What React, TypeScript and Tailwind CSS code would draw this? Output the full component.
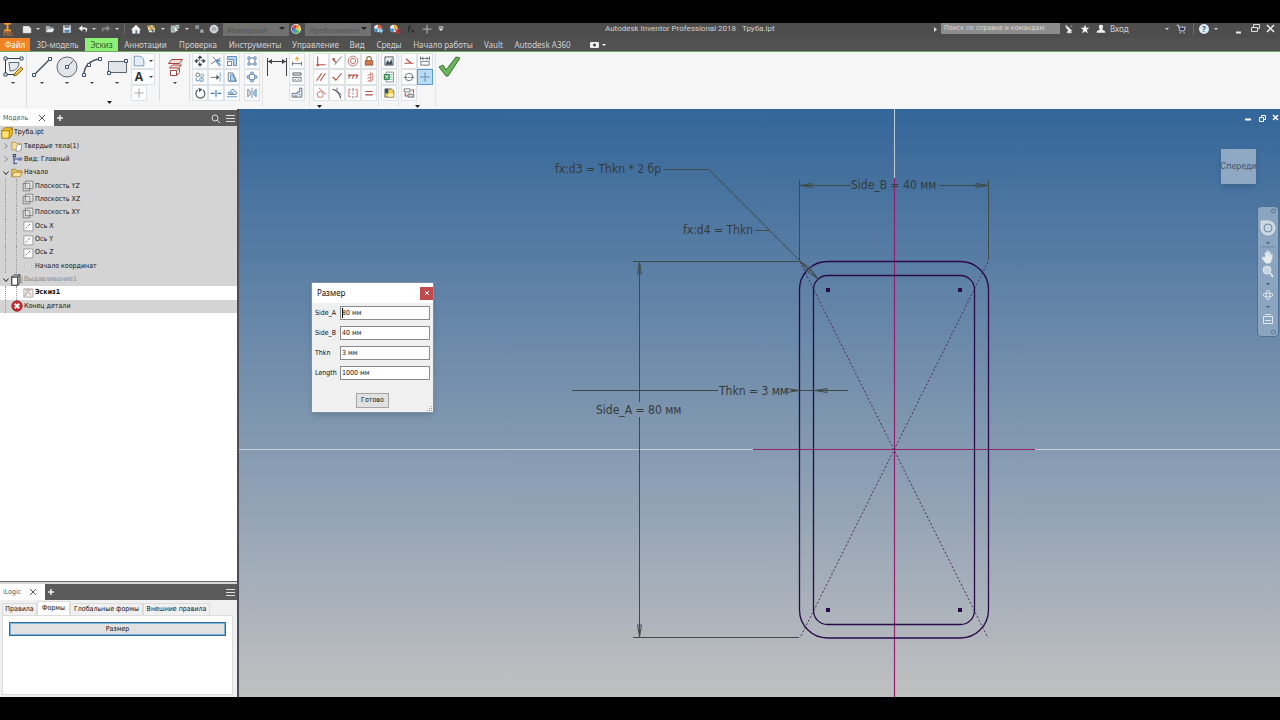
import type { ReactNode } from "react";

const art: Record<string, ReactNode> = {
  // quick access bar
  newFile: <path d="M2 4h9l3 3v7H2z" fill="#e8e8e8" stroke="#fff" />,
  open: (
    <>
      <path d="M2 13V4h5l1 2h5v2" fill="#9aa3ab" stroke="#cfd5da" />
      <path d="M2 13l3-5h10l-3 5z" fill="#e4e7ea" />
    </>
  ),
  save: (
    <>
      <path d="M2 2h12v12H2z" fill="#e6eaee" />
      <path d="M4 2h8v4H4z" fill="#6b7680" />
      <path d="M4 9h8v5H4z" fill="#5a8cb8" />
    </>
  ),
  undo: <path d="M7 2L1 7l6 5V8.500h4c2 0 2 2 1 5 4-3 4-8-1-8H7z" fill="#f2f2f2" />,
  redo: <path d="M9 2l6 5-6 5V8.500H5c-2 0-2 2-1 5-4-3-4-8 1-8h4z" fill="#8a8a8a" />,
  home: (
    <>
      <path d="M0 9l8-8 8 8h-2v6H2V9z" fill="#f1f1f1" />
      <path d="M7 10h3v5H7z" fill="#3f78a8" />
    </>
  ),
  sheet: (
    <>
      <path d="M2 3l8-1 4 3v8H5z" fill="#f3e3b4" />
      <path d="M2 3l7 3 5-1M5 9l8 1" stroke="#c3872b" strokeWidth="2" fill="none" />
      <path d="M8 6l5 5-3 2z" fill="#3f6b95" />
    </>
  ),
  pick: (
    <>
      <path d="M2 3h5v10H2zM9 2h5v5H9z" fill="#8fb4a4" stroke="#e6e6e6" />
      <path d="M7 4l6 7-3 0-1 3z" fill="#fff" />
    </>
  ),
  dots: (
    <>
      <path d="M2 2h6v6H2z" fill="#8d9499" />
      <path d="M10 9h5v5h-5z" fill="#aab0b5" />
    </>
  ),
  globe: (
    <>
      <circle cx="8" cy="8" r="7" fill="#dfe3e7" />
      <path d="M2 8h12M8 2v12M4 3.500c3 3 3 6 0 9M12 3.500c-3 3-3 6 0 9" stroke="#7d8489" fill="none" />
    </>
  ),
  wheel: (
    <>
      <circle cx="8" cy="8" r="8" fill="#eee" />
      <path d="M8 8V1a7 7 0 0 1 6 3.500z" fill="#f08a2c" />
      <path d="M8 8l6-3.500a7 7 0 0 1 0 7z" fill="#e8d53a" />
      <path d="M8 8l6 3.500A7 7 0 0 1 8 15z" fill="#5cb85c" />
      <path d="M8 8v7a7 7 0 0 1-6-3.500z" fill="#3c9ad6" />
      <path d="M8 8l-6 3.500a7 7 0 0 1 0-7z" fill="#6a55b5" />
      <path d="M8 8L2 4.500A7 7 0 0 1 8 1z" fill="#d8413c" />
    </>
  ),
  wheelAdd: (
    <>
      <circle cx="6" cy="7" r="6" fill="#e7edf2" />
      <path d="M6 7V1a6 6 0 0 1 6 6z" fill="#e3573c" />
      <path d="M6 7H0a6 6 0 0 0 6 6z" fill="#3f8fd0" />
      <path d="M8 9h7l-3.500 6z" fill="#bfe0f7" stroke="#3f8fd0" />
    </>
  ),
  wheelClear: (
    <>
      <circle cx="6" cy="7" r="6" fill="#e7edf2" />
      <path d="M6 7V1a6 6 0 0 1 6 6z" fill="#e9b23c" />
      <path d="M6 7H0a6 6 0 0 0 6 6z" fill="#3f8fd0" />
      <path d="M8 8l7 7M15 8l-7 7" stroke="#d22f2a" strokeWidth="2" />
    </>
  ),
  fx: (
    <path d="M8 2c-3-1-3 3-3 6s-1 6-3 5M3 6h5M9 9l4 5M13 9l-5 5" stroke="#1f1f1f" strokeWidth="1.500" fill="none" />
  ),
  cross: <path d="M8 1v14M1 8h14" stroke="#a5a5a5" strokeWidth="2" />,
  more: <path d="M3 3h10v2H3zM3 7h10l-5 5z" fill="#e8e8e8" />,
  dish: <path d="M3 2c0 5 4 9 10 9L3 2zM7 10l-2 4h7l-3-4zM10 5l3-3" fill="#eee" stroke="#eee" />,
  star: <path d="M8 1l2 5h5l-4 3.200L12.500 15 8 11.500 3.500 15 5 9.200 1 6h5z" fill="#f1f1f1" />,
  person: <path d="M8 1c3 0 4 2 3 5l-1 3c3 1 5 2 5 4v1H1v-1c0-2 2-3 5-4L5 6C4 3 5 1 8 1z" fill="#f1f1f1" />,
  cart: (
    <>
      <path d="M4 4h11l-2 7H6z" fill="#2b2f55" />
      <path d="M1 2h3l2 9h7l2-6H5M6 14h2M12 14h2" stroke="#d9dcf0" strokeWidth="1.500" fill="none" />
    </>
  ),
  // sketch tools
  move: <path d="M8 1l2.500 3h-5zM8 15l2.500-3h-5zM1 8l3-2.500v5zM15 8l-3-2.500v5zM7.500 4v3M7.500 9v3M4 7.500h3M9 7.500h3" fill="#3d4650" stroke="#3d4650" />,
  trim: (
    <>
      <path d="M1 12L14 4M4 2l6 8" stroke="#4b5158" fill="none" />
      <path d="M8 7l6 1M8 7l4 6" stroke="#4d8fc9" strokeWidth="2" />
      <circle cx="13" cy="13" r="1.500" fill="none" stroke="#4d8fc9" />
    </>
  ),
  scale: (
    <>
      <path d="M2 2h12v12h-4V6H2z" fill="#b9d6ee" stroke="#3c78b0" />
      <path d="M2 8.500h5.500V14H2z" fill="#fff" stroke="#4b5158" />
    </>
  ),
  copy: (
    <>
      <circle cx="5" cy="5" r="2.500" fill="#fff" stroke="#4b5158" />
      <circle cx="11" cy="6" r="2" fill="none" stroke="#4d8fc9" />
      <circle cx="10" cy="11.500" r="2.500" fill="#dcebf7" stroke="#3c78b0" />
      <path d="M3 9v4h4" stroke="#3c78b0" fill="none" />
    </>
  ),
  extend: (
    <>
      <path d="M13.500 2v12" stroke="#4b8fc9" />
      <path d="M1 8.500h7M9 6l3 2.500L9 11z" stroke="#4b5158" fill="#4b5158" />
    </>
  ),
  stretch: (
    <>
      <path d="M3 2.500h6l5 11H3z" fill="#fff" stroke="#4b5158" />
      <path d="M6 5l3 0 4 8.500H6z" fill="#b9d6ee" stroke="#3c78b0" />
    </>
  ),
  rotate: (
    <>
      <path d="M5 4a6 6 0 1 0 7 0" fill="none" stroke="#4b5158" strokeWidth="1.500" />
      <path d="M6 1l5 2-4 4z" fill="#4b5158" />
    </>
  ),
  split: <path d="M1 8.500h5M10 8.500h5M8 4v9" stroke="#3c78b0" strokeWidth="1.500" />,
  offset: (
    <>
      <path d="M1 13h14M3 10V7h3c0-5 6-5 6-1 3 0 3 4 1 4z" fill="#dcebf7" stroke="#3c78b0" />
      <path d="M6 10c0-3 4-3 4 0" fill="none" stroke="#4b5158" />
    </>
  ),
  patternRect: (
    <>
      <path d="M2.500 2.500h3v3h-3zM10.500 2.500h3v3h-3zM2.500 10.500h3v3h-3zM10.500 10.500h3v3h-3z" fill="#dcebf7" stroke="#3c78b0" />
      <path d="M6 4h4M6 12h4M4 6v4M12 6v4" stroke="#4b5158" />
    </>
  ),
  patternRound: (
    <>
      <circle cx="8" cy="8" r="4.500" fill="none" stroke="#4b5158" />
      <path d="M6.500 1.500h3v3h-3zM6.500 11.500h3v3h-3zM1.500 6.500h3v3h-3zM11.500 6.500h3v3h-3z" fill="#dcebf7" stroke="#3c78b0" />
    </>
  ),
  mirror: (
    <>
      <path d="M2.500 3v10l3-3V6z" fill="#fff" stroke="#4b5158" />
      <path d="M13.500 3v10l-3-3V6z" fill="#b9d6ee" stroke="#3c78b0" />
      <path d="M8 1v14" stroke="#3c78b0" />
    </>
  ),
  autoDim: (
    <>
      <path d="M8 1L5 6h3l-1 4 4-6H8z" fill="#f0a92e" />
      <path d="M2 11.500h12M2 9v5M14 9v5" stroke="#4b5158" />
    </>
  ),
  showCon: (
    <>
      <path d="M2.500 2.500h11v3h-11z" fill="#d5d8db" stroke="#4b5158" />
      <path d="M2.500 8.500h11v5h-11zM5 12l2-2M9 12l2-2" fill="#fff" stroke="#4b5158" />
    </>
  ),
  editCon: <path d="M1.500 8.500h7v-2h3V1.500h3v12h-13zM4 12h4M10 9l2 2" fill="#dcebf7" stroke="#4b5158" />,
  // constraints
  coincident: (
    <>
      <path d="M3.500 2v11H14" stroke="#b5504a" strokeWidth="1.500" fill="none" />
      <path d="M2 12h3v3H2z" fill="#b5504a" />
    </>
  ),
  collinear: (
    <>
      <path d="M14 2L5 13" stroke="#4b5158" />
      <path d="M3 6l4 4" stroke="#b5504a" strokeWidth="1.500" fill="none" />
      <path d="M2 4h3v3H2z" fill="#b5504a" />
    </>
  ),
  concentric: (
    <g fill="none" stroke="#b5504a">
      <circle cx="8" cy="8" r="6.500" />
      <circle cx="8" cy="8" r="3.500" />
    </g>
  ),
  fix: (
    <>
      <path d="M5 8V5c0-4 6-4 6 0v3" fill="none" stroke="#8a6a48" strokeWidth="1.500" />
      <path d="M3 7.500h10v6H3z" fill="#cf7a4b" stroke="#8f4a2b" />
    </>
  ),
  parallel: <path d="M2 13L9 3M7 13l7-10" stroke="#b5504a" strokeWidth="1.500" />,
  perpendicular: <path d="M14 3L6 13M2 8l5 4" stroke="#b5504a" strokeWidth="1.500" />,
  horizontal: <path d="M1 5.500h14M2 10l2-4M7 10l2-4M12 10l2-4" stroke="#b5504a" strokeWidth="1.500" />,
  vertical: <path d="M10.500 1v14M13 3v10M6 6l4-2M6 10l4-2M6 14l4-2" stroke="#b5504a" />,
  tangent: (
    <>
      <circle cx="7" cy="10" r="4" fill="none" stroke="#b5504a" />
      <path d="M5 1l10 9" stroke="#b5504a" />
    </>
  ),
  smooth: (
    <>
      <path d="M2 3c5 1 9 5 11 12" fill="none" stroke="#4b5158" strokeWidth="1.500" />
      <path d="M8 1v5l6 4" fill="none" stroke="#4b5158" />
    </>
  ),
  symmetric: (
    <>
      <path d="M5 3H2.500v10H5M11 3h2.500v10H11" fill="none" stroke="#b5504a" />
      <path d="M8 1v5M8 8v2M8 12v3" stroke="#4b5158" />
    </>
  ),
  equal: <path d="M3 6h10M3 10.500h10" stroke="#b5504a" strokeWidth="1.500" />,
  // insert and format
  image: (
    <>
      <path d="M2.500 2.500h11v11h-11z" fill="#e9edf1" stroke="#30363c" />
      <path d="M3 13l3-6 3 3 2-5 2 8z" fill="#3e4f60" />
    </>
  ),
  excel: (
    <>
      <path d="M4 1.500h10v13H4z" fill="#fff" stroke="#68737d" />
      <path d="M9 5h4M9 8h4M9 11h4" stroke="#68a57c" />
      <path d="M1 4h8v8H1z" fill="#2f8a50" />
      <path d="M3 6l4 4M7 6l-4 4" stroke="#fff" strokeWidth="1.500" />
    </>
  ),
  acad: (
    <>
      <path d="M2.500 2.500h9l3 3v8h-12z" fill="#f2cf4a" stroke="#4b5158" />
      <path d="M3 2.500h4v6H3z" fill="#2c4c70" />
      <path d="M7 9h7v4H7z" fill="#fff3bd" />
    </>
  ),
  construction: <path d="M2 11h12M4 5l7 6" stroke="#b5504a" strokeWidth="1.500" />,
  driven: (
    <>
      <path d="M2.500 8.500h11v5h-11z" fill="#fff" stroke="#4b5158" />
      <path d="M2 4.500h12M2 2v5M14 2v5M6 3L4 4.500 6 6M10 3l2 1.500L10 6" fill="none" stroke="#4b5158" />
    </>
  ),
  centerline: (
    <>
      <circle cx="8" cy="8" r="5" fill="none" stroke="#4b5158" />
      <path d="M1 8.500h5M7 8.500h2M10 8.500h5" stroke="#4b5158" />
    </>
  ),
  centerpoint: <path d="M8 2v4M8 7v2M8 10v4M2 8h4M7 8h2M10 8h4" stroke="#3b5f80" />,
  format: (
    <>
      <path d="M1.500 2.500h8v4h-8z" fill="#fff" stroke="#4b5158" />
      <path d="M6.500 9.500h8v4h-8z" fill="#d5d8db" stroke="#4b5158" />
      <path d="M11 4h3v4M3 8v4h3" stroke="#b5504a" strokeWidth="1.500" fill="none" />
    </>
  ),
  fillet: <path d="M1.500 14.500v-13h5c5 0 8 3 8 8v5z" fill="#e3eef8" stroke="#4f7ba6" />,
  point: <path d="M8 2v12M2 8h12" stroke="#8b9095" />,
  // browser tree
  part: (
    <>
      <path d="M1 5l4-4h10v9l-4 5H1z" fill="#f2c230" stroke="#8b6508" />
      <path d="M1 5h10v10M11 5l4-4" fill="none" stroke="#8b6508" />
      <path d="M2 6h8v8H2z" fill="#ffe27a" />
    </>
  ),
  solids: (
    <>
      <path d="M1 13V3h5l2 2h6v8z" fill="#f4dc98" stroke="#a98a45" />
      <path d="M7 10l2-4h5v5l-3 4H7z" fill="#fff" stroke="#8a8a8a" />
    </>
  ),
  view: (
    <>
      <path d="M3 2h3v3H3zM4 5v10M5 8h4M5 14h3" fill="none" stroke="#3c4b86" strokeWidth="1.500" />
      <path d="M9 6h6v4H9z" fill="#6f7fc0" />
    </>
  ),
  folder: (
    <>
      <path d="M1 13V3h5l2 2h6v3" fill="#e8c468" stroke="#a37b23" />
      <path d="M1 13l3-6h11l-3 6z" fill="#fbe3a0" stroke="#a37b23" />
    </>
  ),
  plane: (
    <>
      <path d="M4.500 1.500h10v10h-10z" fill="#e4e4e4" stroke="#6d6d6d" />
      <path d="M1.500 4.500h9v10h-9z" fill="none" stroke="#6d6d6d" />
    </>
  ),
  axis: (
    <>
      <path d="M2.500 2.500h12v12h-12z" fill="#fff" stroke="#888" />
      <path d="M5 11l2-2M8 8l3-3" stroke="#555" />
    </>
  ),
  origin: <path d="M8 3l5 5-5 5-5-5zM8 5v6M5 8h6" fill="#eee" stroke="#b5b5b5" />,
  extrude: (
    <>
      <path d="M1 4h8v11H1z" fill="#fff" stroke="#333" strokeWidth="1.500" />
      <path d="M1 4l3-3h8l-3 3zM12 1v11l-3 3V4z" fill="#aaa" stroke="#444" />
      <path d="M14.500 3v10" stroke="#888" />
    </>
  ),
  sketch: (
    <>
      <path d="M2.500 2.500h12v11h-12z" fill="#eee" stroke="#999" />
      <path d="M4 12l3-6 5 5M5 4h7" stroke="#a77" fill="none" />
    </>
  ),
  end: (
    <>
      <circle cx="8" cy="8" r="7" fill="#cc2a33" stroke="#7f1a20" />
      <path d="M5 5l6 6M11 5l-6 6" stroke="#fff" strokeWidth="2.500" />
    </>
  ),
};

function Icon({ name, className = "size-3" }: { name: string; className?: string }) {
  return (
    <svg viewBox="0 0 16 16" className={`${className} shrink-0`} aria-hidden="true">
      {art[name]}
    </svg>
  );
}

function Caret({ className = "text-neutral-700" }: { className?: string }) {
  return (
    <svg viewBox="0 0 4 2" className={`h-[2px] w-1 shrink-0 ${className}`} aria-hidden="true">
      <path d="M0 0h4L2 2z" fill="currentColor" />
    </svg>
  );
}

const quickLeft = [
  { icon: "newFile", w: "w-3.5", caret: "w-2" },
  { icon: "open", w: "w-4" },
  { icon: "save", w: "w-[18px]" },
  { icon: "undo", w: "w-3.5", caret: "w-2" },
  { icon: "redo", w: "w-4", caret: "w-1.5" },
  { icon: "", w: "w-2" },
  { icon: "home", w: "w-4" },
  { icon: "sheet", w: "w-3.5", caret: "w-2.5" },
  { icon: "pick", w: "w-3.5", caret: "w-2.5" },
  { icon: "dots", w: "w-3.5" },
  { icon: "globe", w: "w-4" },
];

const quickRight = ["wheelAdd", "wheelClear", "fx", "cross"];

function FadedSelect({ label, text }: { label: string; text: string }) {
  return (
    <div className="relative h-[13px] w-[66px] shrink-0 self-start">
      <select
        aria-label={label}
        className="block h-[13px] w-full appearance-none bg-[#717171] px-1 text-[8px] leading-[12px] text-[#525252] italic"
      >
        <option>{text}</option>
      </select>
      <span className="pointer-events-none absolute top-1 right-1 text-[#222]">
        <svg viewBox="0 0 6 3" className="h-[3px] w-1.5">
          <path d="M0 0h6L3 3z" fill="currentColor" />
        </svg>
      </span>
    </div>
  );
}

function TitleBar() {
  return (
    <header className="flex h-[15px] items-start bg-[#4d4d4d] font-[Roboto,sans-serif] text-[8px] leading-[12px] text-[#d0d0d0]">
      <div className="flex w-[605px] shrink-0 items-start">
        <button aria-label="Inventor" className="flex h-[15px] w-5 flex-col items-start pl-[3px]">
          <svg viewBox="0 0 10 9" className="h-[9px] w-2.5">
            <path d="M1 0h7v1.500H5.500v5H8V8.500H1V6.500h2.500v-5H1z" fill="#f59a36" />
          </svg>
          <span className="text-[5px] leading-[5px] text-[#d9822b]">PRO</span>
        </button>
        {quickLeft.map((q, i) =>
          q.icon ? (
            <div key={i} className="flex h-3 items-center">
              <button aria-label={q.icon} className={`flex justify-center ${q.w}`}>
                <Icon name={q.icon} className="size-2.5" />
              </button>
              {q.caret && (
                <span className={`flex justify-center ${q.caret}`}>
                  <Caret className="text-neutral-300" />
                </span>
              )}
            </div>
          ) : (
            <span key={i} className="flex h-3 w-2 justify-center">
              <span className="w-px bg-[#6a6a6a]" />
            </span>
          ),
        )}
        <div className="ml-px flex h-3 items-center font-['Noto_Sans',sans-serif]">
          <FadedSelect label="Материал" text="Материал" />
          <button aria-label="wheel" className="mr-0.5 flex w-3.5 justify-center">
            <Icon name="wheel" className="size-2.5" />
          </button>
          <FadedSelect label="Представление" text="Представлен" />
          {quickRight.map((n) => (
            <button key={n} aria-label={n} className="flex w-4 justify-center">
              <Icon name={n} className="size-2.5" />
            </button>
          ))}
          <button aria-label="more" className="flex w-3 justify-center">
            <Icon name="more" className="size-2" />
          </button>
        </div>
      </div>
      <h1 className="whitespace-pre">Autodesk Inventor Professional 2018   Труба.ipt</h1>
      <div className="ml-auto flex h-3 items-center font-['Noto_Sans',sans-serif]">
        <svg viewBox="0 0 3 5" className="mr-1 h-[5px] w-[3px]">
          <path d="M0 0l3 2.500L0 5z" fill="#ddd" />
        </svg>
        <input
          aria-label="Поиск"
          placeholder="Поиск по справке и командам."
          className="mr-px h-[11px] w-[119px] self-start bg-[#8c8c8c] px-[3px] font-['DejaVu_Sans_Condensed','DejaVu_Sans',sans-serif] text-[7px] leading-[11px] placeholder:text-[#dcdcdc]"
        />
        {["dish", "star", "person"].map((n) => (
          <button key={n} aria-label={n} className="flex w-4 justify-center">
            <Icon name={n} className="size-2.5" />
          </button>
        ))}
        <button className="flex w-[53px] justify-start pl-px">Вход</button>
        <span className="flex w-2.5 justify-center">
          <Caret className="text-neutral-300" />
        </span>
        <button aria-label="cart" className="mr-px flex w-[18px] justify-center">
          <Icon name="cart" className="size-2.5" />
        </button>
        <span className="mx-[2px] h-3 w-px bg-[#6a6a6a]" />
        <button aria-label="help" className="flex w-4 justify-center">
          <span className="flex size-2.5 items-center justify-center rounded-full bg-[#dfeaf4] text-[8px] font-bold text-[#27598c]">
            ?
          </span>
        </button>
        <span className="mr-2.5 flex w-2 justify-center">
          <Caret className="text-neutral-300" />
        </span>
        <svg viewBox="0 0 50 12" className="h-3 w-[50px]">
          <path d="M6 9.500h5" stroke="#eee" strokeWidth="2" />
          <path d="M21.500 4.500h6v4h-6zM23.500 4V1.500h6v4H28" fill="none" stroke="#ddd" />
          <path d="M37 2l7 7M44 2l-7 7" stroke="#eee" strokeWidth="1.500" />
        </svg>
      </div>
    </header>
  );
}

const menu = [
  { label: "Файл", cls: "w-[30px] bg-[#f08326] text-white" },
  { label: "3D-модель", cls: "w-[55px]" },
  { label: "Эскиз", cls: "w-[33px] bg-[#8ff078] text-[#2c5a22]" },
  { label: "Аннотации", cls: "w-[55px]" },
  { label: "Проверка", cls: "w-[50px]" },
  { label: "Инструменты", cls: "w-16" },
  { label: "Управление", cls: "w-[57px]" },
  { label: "Вид", cls: "w-[26px]" },
  { label: "Среды", cls: "w-[38px]" },
  { label: "Начало работы", cls: "w-[70px]" },
  { label: "Vault", cls: "w-[31px]" },
  { label: "Autodesk A360", cls: "w-[67px]" },
];

function Menu() {
  return (
    <nav className="flex h-3.5 items-stretch border-b border-[#6fa663] bg-[#515151] text-[8px] leading-[12px] text-[#d2d2d2]">
      {menu.map((m) => (
        <button key={m.label} className={`shrink-0 text-center whitespace-nowrap ${m.cls}`}>
          {m.label}
        </button>
      ))}
      <button aria-label="camera" className="ml-3.5 flex items-center gap-[3px]">
        <svg viewBox="0 0 9 6" className="h-1.5 w-[9px]">
          <rect width="9" height="6" rx="1" fill="#eee" />
          <circle cx="4.500" cy="3" r="1.500" fill="#444" />
        </svg>
        <Caret className="text-white" />
      </button>
    </nav>
  );
}

function ToolGrid({ columns }: { columns: string[][] }) {
  return (
    <div className="flex">
      {columns.map((col, i) => (
        <div key={i} className="flex flex-col">
          {col.map((n) => (
            <button
              key={n}
              aria-label={n}
              className={`flex size-4 items-center justify-center border ${
                n === "centerpoint" ? "border-[#5b9bd0] bg-[#b8dcf5]" : "border-[#dde2e7] bg-[#fcfcfc]"
              }`}
            >
              <Icon name={n} />
            </button>
          ))}
        </div>
      ))}
    </div>
  );
}

function BigTool({ label, caret = true, children }: { label: string; caret?: boolean; children: ReactNode }) {
  return (
    <button aria-label={label} className="flex h-8 w-[25px] shrink-0 flex-col items-center gap-1 pt-[3px]">
      <svg viewBox="0 0 22 22" className="size-[22px] shrink-0">
        {children}
      </svg>
      {caret && <Caret />}
    </button>
  );
}

const knob = { fill: "#eef3f8", stroke: "#3f5368" };

function PanelMore() {
  return (
    <svg viewBox="0 0 5 3" className="h-[3px] w-[5px]">
      <path d="M0 0h5L2.500 3z" fill="#222" />
    </svg>
  );
}

function Ribbon() {
  return (
    <div className="flex h-[57px] items-start bg-[#f5f6f5] pt-px">
      <div className="mr-[2px] flex h-[54px] w-[27px] border-r border-[#dcdcdc]">
        <BigTool label="Эскиз">
          <path d="M3.500 2.500h16M3.500 2.500v16h9" fill="none" stroke="#2f3d4c" />
          <path d="M7 6.500h10c0 5-3 8.500-9 8.500z" fill="#e6ebf0" stroke="#5b6875" />
          <path d="M12 20l1-3 6-6 2 2-6 6z" fill="#f2c142" stroke="#8b6a1c" />
          <path d="M2 1h3v3H2zM18 1h3v3h-3zM2 17h3v3H2z" {...knob} />
        </BigTool>
      </div>
      <div className="flex h-[54px] flex-col">
        <div className="flex w-32">
          <BigTool label="Отрезок">
            <path d="M3 19L19 3" stroke="#4b5158" strokeWidth="1.500" />
            <path d="M1.500 17.500h3v3h-3zM17.500 1.500h3v3h-3z" {...knob} />
          </BigTool>
          <BigTool label="Окружность">
            <circle cx="11" cy="11" r="10" fill="#e2e5e9" stroke="#5c646c" />
            <path d="M11 11l6-6" stroke="#4b5158" />
            <path d="M9.500 9.500h3v3h-3z" {...knob} />
          </BigTool>
          <BigTool label="Дуга">
            <path d="M3 19C3 10 9 4 19 3" fill="none" stroke="#4b5158" strokeWidth="1.500" />
            <path d="M1.500 17.500h3v3h-3zM17.500 1.500h3v3h-3zM6.500 7.500h3v3h-3z" {...knob} />
          </BigTool>
          <BigTool label="Прямоугольник">
            <path d="M2.500 5.500h18v11h-18z" fill="#e2e5e9" stroke="#5c646c" />
            <path d="M1.500 15.500h3v3h-3zM18.500 3.500h3v3h-3z" {...knob} />
          </BigTool>
          <div className="ml-[2px] flex flex-col">
            <button aria-label="Сопряжение" className="flex h-4 w-6 items-center gap-1 border border-[#dde2e7] bg-[#fcfcfc] pl-px">
              <Icon name="fillet" />
              <Caret />
            </button>
            <button className="flex h-4 w-6 items-center gap-1 border border-[#dde2e7] bg-[#fcfcfc] pl-px font-['Open_Sans',sans-serif] text-xs leading-3 font-bold text-[#333]">
              <span className="w-3 text-center">A</span>
              <Caret />
            </button>
            <button aria-label="Точка" className="flex size-4 items-center justify-center border border-[#dde2e7] bg-[#fcfcfc]">
              <Icon name="point" />
            </button>
          </div>
        </div>
        <div className="flex justify-center pl-8">
          <PanelMore />
        </div>
      </div>
      <div className="ml-[2px] flex h-12 w-[31px] justify-center border-x border-[#dcdcdc]">
        <BigTool label="Проецировать геометрию">
          <g fill="#f2dcda" stroke="#a3443f">
            <path d="M4.500 7.500l3-4h11l-3 4z" />
            <path d="M5.500 12l3-3h9l-3 3z" />
            <path d="M6.500 14.500h6v5h-6zM12.500 14.500l3-2v4l-3 3" fill="#fff" />
          </g>
        </BigTool>
      </div>
      <div className="ml-[2px] flex gap-1">
        <ToolGrid
          columns={[
            ["move", "copy", "rotate"],
            ["trim", "extend", "split"],
            ["scale", "stretch", "offset"],
          ]}
        />
        <ToolGrid columns={[["patternRect", "patternRound", "mirror"]]} />
      </div>
      <div className="ml-[2px] flex h-[54px] border-l border-[#e4e4e4] pl-px">
        <BigTool label="Размеры" caret={false}>
          <path d="M1.500 2v18M20.500 2v18M2 5.500h18" stroke="#3c4248" />
          <path d="M2 5.500L6 3v5zM20 5.500L16 3v5z" fill="#3c4248" />
        </BigTool>
        <ToolGrid columns={[["autoDim", "showCon", "editCon"]]} />
      </div>
      <div className="ml-1 flex h-[54px] flex-col gap-1 border-l border-[#e4e4e4] pl-[3px]">
        <ToolGrid
          columns={[
            ["coincident", "parallel", "tangent"],
            ["collinear", "perpendicular", "smooth"],
            ["concentric", "horizontal", "symmetric"],
            ["fix", "vertical", "equal"],
          ]}
        />
        <div className="pl-1">
          <PanelMore />
        </div>
      </div>
      <div className="ml-px h-[54px] border-l border-[#e4e4e4] pl-[2px]">
        <ToolGrid columns={[["image", "excel", "acad"]]} />
      </div>
      <div className="ml-px flex h-[54px] flex-col gap-1 border-l border-[#e4e4e4] pl-[2px]">
        <ToolGrid columns={[["construction", "centerline", "format"], ["driven", "centerpoint"]]} />
        <div className="flex justify-center">
          <PanelMore />
        </div>
      </div>
      <div className="ml-[2px] h-[54px] border-l border-[#e4e4e4]">
        <BigTool label="Принять эскиз" caret={false}>
          <path d="M1 11l4-2 3 5L18 1l4 1L10 20H8z" fill="#6db35e" stroke="#33752b" />
        </BigTool>
      </div>
    </div>
  );
}

function DockHeader({ title, width, search }: { title: string; width: string; search?: boolean }) {
  return (
    <div className="flex h-4 shrink-0 items-stretch bg-[#5b5b5b] font-['DejaVu_Sans_Condensed','DejaVu_Sans',sans-serif] text-[7px] text-[#555]">
      <div className={`flex items-center justify-between bg-white pr-[9px] pl-[3px] ${width}`}>
        <span>{title}</span>
        <button aria-label={`Закрыть ${title}`}>
          <svg viewBox="0 0 6 6" className="size-1.5">
            <path d="M0 0l6 6M6 0L0 6" stroke="#555" />
          </svg>
        </button>
      </div>
      <button aria-label="Добавить" className="pl-[3px]">
        <svg viewBox="0 0 6 6" className="size-1.5">
          <path d="M3 0v6M0 3h6" stroke="#eee" strokeWidth="1.500" />
        </svg>
      </button>
      <div className="ml-auto flex items-center gap-1.5 pr-0.5">
        {search && (
          <button aria-label="Найти">
            <svg viewBox="0 0 9 9" className="size-[9px]">
              <circle cx="4" cy="4" r="3" fill="none" stroke="#ddd" />
              <path d="M6 6l3 3" stroke="#ddd" />
            </svg>
          </button>
        )}
        <button aria-label="Меню">
          <svg viewBox="0 0 9 7" className="h-[7px] w-[9px]">
            <path d="M0 .5h9M0 3.500h9M0 6.500h9" stroke="#ddd" />
          </svg>
        </button>
      </div>
    </div>
  );
}

type Row = { label: string; icon: string; level: number; open?: boolean; tone?: string };

const tree: Row[] = [
  { label: "Труба.ipt", icon: "part", level: 0 },
  { label: "Твердые тела(1)", icon: "solids", level: 1, open: false },
  { label: "Вид: Главный", icon: "view", level: 1, open: false },
  { label: "Начало", icon: "folder", level: 1, open: true },
  { label: "Плоскость YZ", icon: "plane", level: 2 },
  { label: "Плоскость XZ", icon: "plane", level: 2 },
  { label: "Плоскость XY", icon: "plane", level: 2 },
  { label: "Ось X", icon: "axis", level: 2 },
  { label: "Ось Y", icon: "axis", level: 2 },
  { label: "Ось Z", icon: "axis", level: 2 },
  { label: "Начало координат", icon: "origin", level: 2 },
  { label: "Выдавливание1", icon: "extrude", level: 1, open: true, tone: "text-[#8a8a8a]" },
  { label: "Эскиз1", icon: "sketch", level: 2, tone: "bg-white font-bold" },
  { label: "Конец детали", icon: "end", level: 1 },
];

function Guide() {
  return (
    <span className="flex w-[11px] shrink-0 items-center self-stretch pl-[5px]">
      <span className="h-full border-l border-dotted border-[#999]" />
    </span>
  );
}

function ModelTree() {
  return (
    <ul className="grid h-[187px] auto-rows-fr bg-[#d4d4d4] font-['DejaVu_Sans_Condensed','DejaVu_Sans',sans-serif] text-[7px] leading-[13px] text-[#111]">
      {tree.map((r) => (
        <li key={r.label} className={`flex items-center ${r.tone ?? ""}`}>
          {r.level === 0 && <span className="w-px" />}
          {r.level === 1 && r.open === undefined && <Guide />}
          {r.level === 1 && r.open !== undefined && (
            <button aria-label={r.label} className="flex w-[11px] shrink-0 justify-center">
              <svg viewBox="0 0 6 6" className="size-1.5">
                <path
                  d={r.open ? "M.5 1.500L3 4.500l2.500-3" : "M1.500 .5l3 2.500-3 2.500"}
                  fill="none"
                  stroke={r.open ? "#222" : "#888"}
                />
              </svg>
            </button>
          )}
          {r.level === 2 && (
            <>
              <Guide />
              <Guide />
            </>
          )}
          <Icon name={r.icon} />
          <span className="pl-px whitespace-nowrap">{r.label}</span>
        </li>
      ))}
    </ul>
  );
}

const formTabs = [
  { label: "Правила", cls: "w-[35px]" },
  { label: "Формы", cls: "w-[33px]" },
  { label: "Глобальные формы", cls: "w-[73px]" },
  { label: "Внешние правила", cls: "w-[67px]" },
];

function Sidebar() {
  return (
    <aside className="flex w-[239px] shrink-0 flex-col border-r-2 border-[#4a4f57] bg-white pt-px">
      <DockHeader title="Модель" width="w-[54px]" search />
      <ModelTree />
      <div className="flex-1" />
      <div className="h-[3px] border-t border-[#666] bg-[#d8d8d8]" />
      <DockHeader title="iLogic" width="w-[45px]" />
      <div className="flex h-[97px] flex-col bg-[#f0f0f0] px-0.5 pb-0.5 font-['DejaVu_Sans_Condensed','DejaVu_Sans',sans-serif] text-[7px] text-[#111]">
        <div role="tablist" className="flex items-end pt-px">
          {formTabs.map((t) => (
            <button
              key={t.label}
              role="tab"
              aria-selected={t.label === "Формы"}
              className={`shrink-0 border border-b-0 border-[#dcdcdc] text-center leading-[11px] whitespace-nowrap ${t.cls} ${
                t.label === "Формы" ? "h-3.5 bg-white" : "h-3"
              }`}
            >
              {t.label}
            </button>
          ))}
        </div>
        <div className="mr-0.5 flex-1 border border-[#dcdcdc] bg-white px-1.5 pt-[6px]">
          <button className="h-3.5 w-full border border-[#2f6c9c] bg-[#e1e1e1] leading-[12px] ring-1 ring-[#7db4dc] ring-inset">
            Размер
          </button>
        </div>
      </div>
    </aside>
  );
}

const fields = [
  { id: "side_a", label: "Side_A", value: "80 мм" },
  { id: "side_b", label: "Side_B", value: "40 мм" },
  { id: "thkn", label: "Thkn", value: "3 мм" },
  { id: "length", label: "Length", value: "1000 мм" },
];

function SizeDialog() {
  return (
    <form className="absolute top-[173px] left-[72px] w-[123px] border border-[#7d8fa5] bg-[#f0f0f0] font-['DejaVu_Sans_Condensed','DejaVu_Sans',sans-serif] text-[7px] text-[#111] shadow-md">
      <div className="flex h-5 items-center justify-between bg-white pl-[5px]">
        <h2 className="font-['Noto_Sans',sans-serif] text-[8px]">Размер</h2>
        <button
          type="button"
          aria-label="Закрыть"
          className="flex size-[13px] items-center justify-center bg-[#c24a4f]"
        >
          <svg viewBox="0 0 4 4" className="size-1">
            <path d="M0 0l4 4M4 0L0 4" stroke="#fff" />
          </svg>
        </button>
      </div>
      <div className="flex flex-col gap-1.5 px-[3px] pt-[3px]">
        {fields.map((f, i) => (
          <div key={f.id} className="flex h-3.5 items-center">
            <label htmlFor={f.id} className="w-[25px] shrink-0">
              {f.label}
            </label>
            <div className="relative flex-1">
              <input
                id={f.id}
                defaultValue={f.value}
                className="block h-3.5 w-full border border-[#8a8a8a] bg-white px-px text-[7px] leading-[12px]"
              />
              {i === 0 && <span className="absolute top-0.5 left-0.5 h-2.5 w-px bg-black" />}
            </div>
          </div>
        ))}
      </div>
      <div className="flex justify-center pt-[13px] pb-1">
        <button type="button" className="h-[15px] w-[33px] border border-[#a5a5a5] bg-[#e1e1e1] leading-[13px]">
          Готово
        </button>
      </div>
      <svg viewBox="0 0 6 6" className="absolute right-0 bottom-0 size-1.5">
        <path d="M4 0h1v1H4zM2 2h1v1H2zM4 2h1v1H4zM0 4h1v1H0zM2 4h1v1H2zM4 4h1v1H4z" fill="#999" />
      </svg>
    </form>
  );
}

function Drawing() {
  return (
    <svg
      viewBox="239 109 1041 588"
      className="block h-[588px] w-full font-['DejaVu_Sans_Condensed','DejaVu_Sans',sans-serif]"
      preserveAspectRatio="xMinYMin"
    >
      <path d="M894.500 109v69M239 449.500h514M1035 449.500h245" stroke="#c3ccd4" />
      <path d="M894.500 178v519M753 449.500h282" stroke="#96206f" strokeWidth="1.200" />
      <path d="M800 262l188 376M988 262L800 638" stroke="#4a2d5c" strokeDasharray="2 2" />
      <g fill="none" stroke="#2a0a48" strokeWidth="1.300">
        <rect x="799.500" y="261.500" width="189" height="376.500" rx="28" />
        <rect x="813.500" y="275.500" width="161" height="349" rx="14" />
      </g>
      <path
        d="M826 288h4v4h-4zM958 288h4v4h-4zM826 608h4v4h-4zM958 608h4v4h-4z"
        fill="#2a0a48"
      />
      <g stroke="#3f4b48" fill="none">
        <path d="M799.500 180v80M988.500 180v80M800 185.500h51M939 185.500h49" />
        <path d="M633 261.500h166M633 637.500h166M639.500 262v140M639.500 417v221" />
        <path d="M572 390.500h146M791 390.500h57" />
        <path d="M664 169.500h45L818 279M755 230.500h14" />
        <path d="M800 185.500l12-2v4zM988 185.500l-12-2v4zM639.500 262l-2 12h4zM639.500 637l-2-12h4z" />
        <path d="M799 390.500l-12-2v4zM815 390.500l12-2v4zM818 279l-10-7 3-3zM800 261l10 7-3 3z" />
      </g>
      <g fill="#343c3a" className="text-xs">
        <text x="555" y="173">fx:d3 = Thkn * 2 бр</text>
        <text x="683" y="234">fx:d4 = Thkn</text>
        <text x="851" y="189">Side_B = 40 мм</text>
        <text x="596" y="414">Side_A = 80 мм</text>
        <text x="719" y="395">Thkn = 3 мм</text>
      </g>
    </svg>
  );
}

function NavBar() {
  return (
    <div className="absolute top-[97px] right-px h-[131px] w-[22px] rounded border border-[#4f7197] bg-[#8ba4bf]">
      <svg viewBox="0 0 20 129" className="h-full w-full" fill="none" stroke="#dde5ec">
        <circle cx="15.500" cy="4" r="2" stroke="#5d7590" />
        <path d="M3 14h7a7 7 0 1 1-7 7z" fill="#c9d5e0" />
        <circle cx="10" cy="21" r="4" stroke="#71879e" />
        <path d="M3 40h14" stroke="#6f89a5" />
        <path d="M8 56l-4-5 2-1 2 1-1-5 1 0 1 3V44h1v5l1-4h1v5l2-3v4l-2 5z" fill="#e6ebf0" />
        <circle cx="9" cy="63" r="4" fill="#c9d5e0" />
        <path d="M12 66l3 4" strokeWidth="2" />
        <ellipse cx="10" cy="88" rx="5" ry="2" />
        <ellipse cx="10" cy="88" rx="2" ry="5" />
        <path d="M5.500 109.500h9v7h-9zM7 107.500h6M7 113.500h6" />
        <circle cx="15.500" cy="125" r="2" stroke="#5d7590" />
        <path d="M8 35h4l-2 2zM8 76h4l-2 2zM8 99h4l-2 2z" fill="#3f5a78" stroke="none" />
      </svg>
    </div>
  );
}

function Viewport() {
  return (
    <main className="relative min-w-0 flex-1 overflow-hidden bg-linear-to-b from-[#336699] to-[#c0c0c0]">
      <Drawing />
      <svg viewBox="0 0 36 10" className="absolute top-1 right-0 h-2.5 w-9">
        <path d="M1 6.500h6" stroke="#fff" strokeWidth="2" />
        <path d="M15.500 4.500h4v4h-4zM17.500 4V2.500h4v4H20" fill="none" stroke="#fff" />
        <path d="M29 2l5 5M34 2l-5 5" stroke="#fff" strokeWidth="1.500" />
      </svg>
      <button className="absolute top-10 right-6 flex size-[35px] items-center justify-center bg-[#8fa8c3] font-[Roboto,sans-serif] text-[9px] text-[#4a5a6b] shadow-md">
        Спереди
      </button>
      <NavBar />
      <SizeDialog />
    </main>
  );
}

export default function App() {
  return (
    <div className="flex min-h-screen flex-col bg-black py-[23px] font-['Noto_Sans',sans-serif]">
      <TitleBar />
      <Menu />
      <Ribbon />
      <div className="flex flex-1">
        <Sidebar />
        <Viewport />
      </div>
    </div>
  );
}
